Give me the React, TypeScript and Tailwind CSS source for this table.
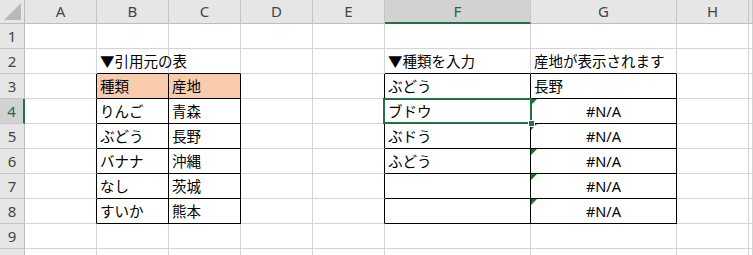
import React from "react";

const COLS = ["", "A", "B", "C", "D", "E", "F", "G", "H", ""];
const COL_WIDTHS = "grid-cols-[25px_72px_72px_72px_72px_72px_146px_146px_72px_1fr]";

type Cell = { text?: string; fill?: boolean; center?: boolean; err?: boolean };

// row -> col index -> cell
const DATA: Record<number, Record<number, Cell>> = {
    2: { 2: { text: "▼引用元の表" }, 6: { text: "▼種類を入力" }, 7: { text: "産地が表示されます" } },
    3: { 2: { text: "種類", fill: true }, 3: { text: "産地", fill: true }, 6: { text: "ぶどう" }, 7: { text: "長野" } },
    4: { 2: { text: "りんご" }, 3: { text: "青森" }, 6: { text: "ブドウ" }, 7: { text: "#N/A", center: true, err: true } },
    5: { 2: { text: "ぶどう" }, 3: { text: "長野" }, 6: { text: "ぶドう" }, 7: { text: "#N/A", center: true, err: true } },
    6: { 2: { text: "バナナ" }, 3: { text: "沖縄" }, 6: { text: "ふどう" }, 7: { text: "#N/A", center: true, err: true } },
    7: { 2: { text: "なし" }, 3: { text: "茨城" }, 7: { text: "#N/A", center: true, err: true } },
    8: { 2: { text: "すいか" }, 3: { text: "熊本" }, 7: { text: "#N/A", center: true, err: true } },
};

const SEL_ROW = 4;
const SEL_COL = 6;

function inTable(r: number, c: number) {
    if (r < 3 || r > 8) return false;
    return c === 2 || c === 3 || c === 6 || c === 7;
}

function ErrorMark() {
    return (
        <svg width="6" height="6" viewBox="0 0 6 6" className="absolute left-0 top-0">
            <polygon points="0,0 6,0 0,6" fill="#0d7d0d" />
        </svg>
    );
}

export default function App() {
    const rows = Array.from({ length: 10 }, (_, i) => i + 1);

    return (
        <div
            className="w-[753px] h-[255px] overflow-hidden bg-white text-[14.5px] text-black"
            style={{ fontFamily: '"Noto Sans", "Noto Sans CJK JP", sans-serif' }}
        >
            <div className={`grid ${COL_WIDTHS} grid-rows-[24px_repeat(10,25px)]`}>
                {/* 列ヘッダー */}
                {COLS.map((label, c) => {
                    if (c === 0) {
                        return (
                            <div key="corner" className="relative bg-[#e6e6e6] border-r border-b border-r-[#bcbcbc] border-b-[#bcbcbc]">
                                <svg width="17" height="17" viewBox="0 0 17 17" className="absolute right-[3px] bottom-[3px]">
                                    <polygon points="17,0 17,17 0,17" fill="#b9b9b9" />
                                </svg>
                            </div>
                        );
                    }
                    const selected = c === SEL_COL;
                    return (
                        <div
                            key={`h${c}`}
                            className={
                                selected
                                    ? "flex items-center justify-center bg-[#d2d2d2] border-r border-r-[#c6c6c6] border-b-2 border-b-[#217346] text-[#1e6b41] text-[15px]"
                                    : "flex items-center justify-center bg-[#e6e6e6] border-r border-r-[#c6c6c6] border-b border-b-[#bcbcbc] text-[#444] text-[15px]"
                            }
                        >
                            {label}
                        </div>
                    );
                })}

                {/* 行 */}
                {rows.map((r) =>
                    COLS.map((_, c) => {
                        if (c === 0) {
                            const selected = r === SEL_ROW;
                            return (
                                <div
                                    key={`r${r}`}
                                    className={
                                        selected
                                            ? "flex items-center justify-center pt-[1px] bg-[#d2d2d2] border-r-2 border-r-[#217346] border-b border-b-[#c6c6c6] text-[#1e6b41] text-[15px]"
                                            : "flex items-center justify-center pt-[1px] bg-[#e6e6e6] border-r border-r-[#bcbcbc] border-b border-b-[#c6c6c6] text-[#444] text-[15px]"
                                    }
                                >
                                    {/* 10行目は下端で見切れるので番号を出さない */}
                                    {r < 10 ? r : null}
                                </div>
                            );
                        }
                        const cell = DATA[r]?.[c] ?? {};
                        const rightBlack = inTable(r, c) || inTable(r, c + 1);
                        const bottomBlack = inTable(r, c) || inTable(r + 1, c);
                        const isSel = r === SEL_ROW && c === SEL_COL;
                        return (
                            <div
                                key={`c${r}-${c}`}
                                className={[
                                    "relative flex items-center pt-[2px] whitespace-nowrap border-r border-b",
                                    rightBlack ? "border-r-black" : "border-r-[#d4d4d4]",
                                    bottomBlack ? "border-b-black" : "border-b-[#d4d4d4]",
                                    cell.fill ? "bg-[#f8cbad]" : "",
                                    cell.center ? "justify-center" : "pl-[3px]",
                                ].join(" ")}
                            >
                                {cell.err && <ErrorMark />}
                                {cell.text}
                                {isSel && (
                                    <>
                                        <div className="absolute z-10 left-[-2px] top-[-1px] right-[-2px] bottom-[-1px] border-2 border-[#217346] pointer-events-none" />
                                        <div className="absolute z-20 right-[-5px] bottom-[-4px] w-[7px] h-[7px] bg-[#217346] border border-white" />
                                    </>
                                )}
                            </div>
                        );
                    })
                )}
            </div>
        </div>
    );
}
